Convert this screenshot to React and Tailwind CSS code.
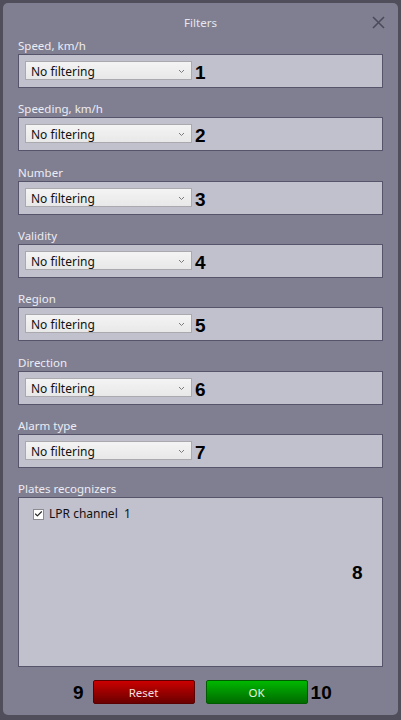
import { Check } from 'lucide-react';

const FILTERS = [
  { label: 'Speed, km/h', num: '1' },
  { label: 'Speeding, km/h', num: '2' },
  { label: 'Number', num: '3' },
  { label: 'Validity', num: '4' },
  { label: 'Region', num: '5' },
  { label: 'Direction', num: '6' },
  { label: 'Alarm type', num: '7' },
];

const font = { fontFamily: '"Noto Sans", "Open Sans", sans-serif' };

const Chevron = () => (
  <svg width="7" height="5" viewBox="0 0 7 5" className="absolute right-[6px] top-[7px]">
    <path d="M1 1 L3.5 3.5 L6 1" fill="none" stroke="#7a7a80" strokeWidth="1" />
  </svg>
);

const Dropdown = () => (
  <div className="relative w-[167px] h-[19px] border border-[#a9a9ae] bg-gradient-to-b from-[#f4f4f4] to-[#e8e8e8]">
    <span className="block h-[17px] overflow-hidden pl-[5px] text-[12px] leading-[20px] text-[#111]">
      No filtering
    </span>
    <Chevron />
  </div>
);

const Num = ({ children, className = '' }) => (
  <span
    className={`text-[19px] font-bold leading-none text-black ${className}`}
    style={{ fontFamily: '"Liberation Sans", Arial, sans-serif' }}
  >
    {children}
  </span>
);

const FilterGroup = ({ label, num }) => (
  <div className="mb-[13.33px]">
    <div className="h-[16px] text-[11.5px] leading-[16px] text-[#ececf2]">{label}</div>
    <div className="h-[34px] border border-[#55546a] bg-[#c1c0cd] pl-[6px] pt-[6px] flex items-start">
      <Dropdown />
      <Num className="ml-[3px] mt-[2px]">{num}</Num>
    </div>
  </div>
);

const App = () => {
  return (
    <div className="w-[401px] h-[720px] bg-[#4f4e5a] pt-[3px] pl-[3px]" style={font}>
      <div className="relative w-[395px] h-[712px] rounded-[5px] bg-[#807f92] px-[15px]">
        {/* Title bar */}
        <div className="h-[35px] pt-[12px] text-center text-[11.5px] leading-[16px] text-[#e6e6ee]">
          Filters
        </div>
        <button className="absolute right-[13px] top-[13px] w-[13px] h-[13px]">
          <svg width="13" height="13" viewBox="0 0 13 13">
            <path d="M1 1 L12 12 M12 1 L1 12" stroke="#4b4a5a" strokeWidth="1.6" />
          </svg>
        </button>

        {FILTERS.map((f) => (
          <FilterGroup key={f.num} label={f.label} num={f.num} />
        ))}

        {/* Plates recognizers */}
        <div className="h-[16px] text-[11.5px] leading-[16px] text-[#ececf2]">Plates recognizers</div>
        <div className="relative h-[170px] border border-[#55546a] bg-[#c1c0cd] pl-[14px] pt-[9px]">
          <div className="flex items-center gap-[5px]">
            <div className="w-[11px] h-[11px] border border-[#8a8a90] bg-white flex items-center justify-center">
              <Check size={10} strokeWidth={3} color="#222" />
            </div>
            <span className="text-[12px] leading-[14px] text-[#111]">LPR channel&nbsp;&nbsp;1</span>
          </div>
          <Num className="absolute left-[333px] top-[65px]">8</Num>
        </div>

        {/* Buttons */}
        <div className="mt-[13px] flex items-center h-[24px]">
          <Num className="ml-[55px] mr-[9px]">9</Num>
          <button className="w-[102px] h-[24px] rounded-[2px] border border-[#5a0000] bg-gradient-to-b from-[#cc0000] to-[#6b0000] text-[11.5px] text-[#f3dede]">
            Reset
          </button>
          <button className="ml-[11px] w-[102px] h-[24px] rounded-[2px] border border-[#005a00] bg-gradient-to-b from-[#00b800] to-[#006b00] text-[11.5px] text-[#e2f5e2]">
            OK
          </button>
          <Num className="ml-[3px]">10</Num>
        </div>
      </div>
    </div>
  );
};

export default App;
